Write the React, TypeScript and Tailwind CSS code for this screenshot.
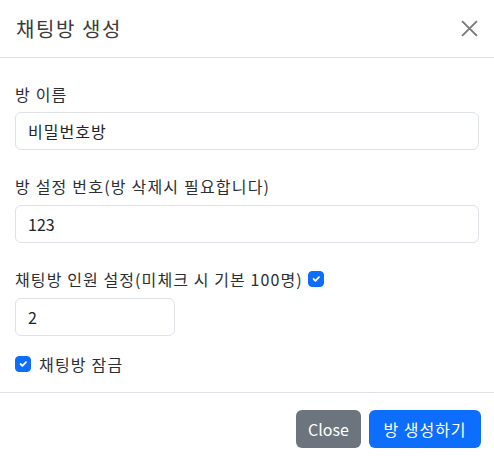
import { useState } from "react"

function CheckBox({ checked, onChange }: { checked: boolean; onChange: () => void }) {
    return (
        <button
            type="button"
            onClick={onChange}
            className={
                "flex h-4 w-4 shrink-0 items-center justify-center rounded-[4px] border " +
                (checked ? "border-[#0d6efd] bg-[#0d6efd]" : "border-[#dee2e6] bg-white")
            }
        >
            {checked && (
                <svg width="12" height="12" viewBox="0 0 20 20" fill="none">
                    <path d="M6 10l3 3l6-6" stroke="#fff" strokeWidth="3" strokeLinecap="round" strokeLinejoin="round" />
                </svg>
            )}
        </button>
    )
}

export default function App() {
    const [name, setName] = useState("비밀번호방")
    const [pw, setPw] = useState("123")
    const [limit, setLimit] = useState("2")
    const [useLimit, setUseLimit] = useState(true)
    const [locked, setLocked] = useState(true)

    const inputCls =
        "h-[38px] rounded-[6px] border border-[#dee2e6] bg-white px-3 text-base text-[#212529] outline-none"

    return (
        <div
            className="min-h-screen w-full bg-white text-[#2b2f33]"
            style={{ fontFamily: '"Noto Sans CJK KR", "Noto Sans", sans-serif' }}
        >
            <header className="flex h-[58px] items-center justify-between border-b border-[#dee2e6] pl-4 pr-[13px]">
                <h1 className="text-[20px] leading-none tracking-[1.6px] text-[#3a3a3a]">채팅방 생성</h1>
                <button type="button" className="flex h-6 w-6 items-center justify-center">
                    <svg width="17" height="17" viewBox="0 0 16 16">
                        <path d="M1 1L15 15M15 1L1 15" stroke="#7a7a7a" strokeWidth="1.8" />
                    </svg>
                </button>
            </header>

            <section className="flex flex-col px-[15px] pt-[24px] pb-[16px]">
                <label className="flex h-6 items-center text-base tracking-[1.2px]">방 이름</label>
                <input
                    className={"mt-[6px] w-full tracking-[1px] " + inputCls}
                    value={name}
                    onChange={(e) => setName(e.target.value)}
                />

                <label className="mt-[24px] flex h-6 items-center text-base tracking-[1.2px]">
                    방 설정 번호(방 삭제시 필요합니다)
                </label>
                <input className={"mt-[7px] w-full " + inputCls} value={pw} onChange={(e) => setPw(e.target.value)} />

                <div className="mt-[24px] flex h-6 items-center gap-[5px] text-base">
                    <span className="tracking-[1.1px]">채팅방 인원 설정(미체크 시 기본 100명)</span>
                    <CheckBox checked={useLimit} onChange={() => setUseLimit(!useLimit)} />
                </div>
                <input
                    className={"mt-[7px] w-[160px] " + inputCls}
                    value={limit}
                    onChange={(e) => setLimit(e.target.value)}
                />

                <div className="mt-[16px] flex h-6 items-center gap-2 text-base">
                    <CheckBox checked={locked} onChange={() => setLocked(!locked)} />
                    <span className="tracking-[1.2px]">채팅방 잠금</span>
                </div>
            </section>

            <footer className="flex justify-end gap-2 border-t border-[#dee2e6] px-[13px] pt-[17px] pb-3">
                <button type="button" className="h-[38px] w-[65px] rounded-[6px] bg-[#6c757d] text-base text-white">
                    Close
                </button>
                <button
                    type="button"
                    className="h-[38px] w-[112px] rounded-[6px] bg-[#0d6efd] text-base tracking-[1px] text-white"
                >
                    방 생성하기
                </button>
            </footer>
        </div>
    )
}
